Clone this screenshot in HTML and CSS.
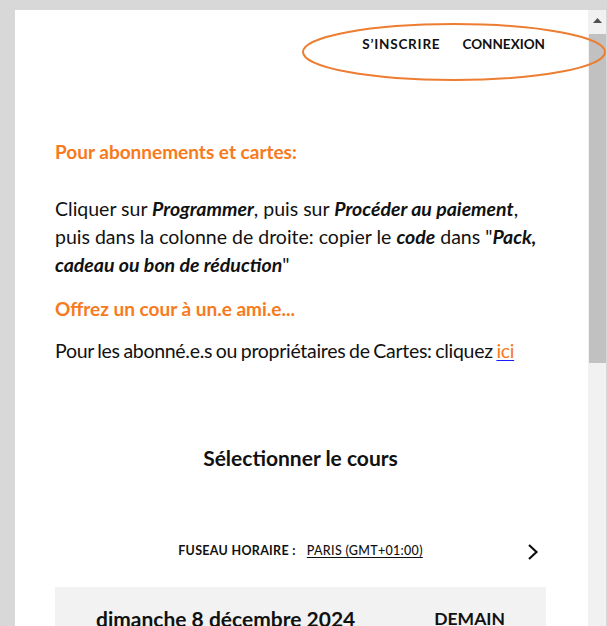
FILE: index.html
```html
<!DOCTYPE html>
<html lang="fr">
<head>
<meta charset="utf-8">
<title>Réservation</title>
<link rel="stylesheet" href="styles.css">
</head>
<body>
<div class="frame">
  <div class="panel">
    <nav class="nav">
      <a class="nav-link" href="#">S’INSCRIRE</a>
      <a class="nav-link narrow" href="#">CONNEXION</a>
    </nav>
    <main class="content">
      <h2 class="promo">Pour abonnements et cartes:</h2>
      <p class="text first">Cliquer sur <b><i>Programmer</i></b>, puis sur <b><i>Procéder au paiement</i></b>, puis dans la colonne de droite: copier le <b><i>code</i></b> dans "<b><i>Pack, cadeau ou bon de réduction</i></b>"</p>
      <h2 class="promo second">Offrez un cour à un.e ami.e...</h2>
      <p class="text tight">Pour les abonné.e.s ou propriétaires de Cartes: cliquez <a class="link" href="#">ici</a></p>
      <h1 class="title">Sélectionner le cours</h1>
      <div class="tz">
        <span class="tz-label">FUSEAU HORAIRE :</span>
        <a class="tz-value" href="#">PARIS (GMT+01:00)</a>
        <svg class="chev" width="14" height="18" viewBox="0 0 14 18"><path d="M3 2 L10.5 9 L3 16" fill="none" stroke="#111" stroke-width="2.2"/></svg>
      </div>
      <div class="day">
        <span class="day-date">dimanche 8 décembre 2024</span>
        <span class="day-tag">DEMAIN</span>
      </div>
    </main>
  </div>
  <div class="scrollbar">
    <div class="sb-btn"><svg width="9" height="5" viewBox="0 0 9 5"><path d="M0 5 L4.5 0 L9 5Z" fill="#505050"/></svg></div>
    <div class="sb-thumb"></div>
    <div class="sb-track"></div>
  </div>
</div>
<svg class="annot" width="320" height="64" viewBox="0 0 320 64"><ellipse cx="152" cy="29" rx="151" ry="28" fill="none" stroke="#ed7d31" stroke-width="2"/></svg>
</body>
</html>
```
FILE: styles.css
```css
html,body{margin:0;padding:0;height:100%;overflow:hidden}
body{background:#d8d8d8;font-family:Lato,"Noto Sans",sans-serif;color:#111;position:relative}
.frame{display:flex;padding:10px 1px 0 15px;height:616px}
.panel{flex:1;background:#fff;overflow:hidden}
.nav{display:flex;justify-content:flex-end;gap:22px;padding:24px 43px 0 0;height:20px}
.nav-link{font-size:13.5px;line-height:20px;font-weight:700;letter-spacing:0.8px;color:#111;text-decoration:none}
.nav-link.narrow{letter-spacing:0}
.content{padding:0 42px 0 40px}
.promo{margin:0;font-size:19px;line-height:24px;font-weight:700;color:#f77a1c}
.promo:first-child{margin-top:86px}
.text{margin:0;font-size:19.5px;line-height:28px}
.text.first{margin-top:31px}
.text.tight{letter-spacing:-0.3px;word-spacing:-1px}
.promo.second{margin-top:18px}
.promo.second + .text{margin-top:16px}
.link{color:#f77a1c;text-decoration-color:#1a1aff;text-underline-offset:2px}
.title{margin:79px 0 0;text-align:center;font-size:21px;line-height:28px;font-weight:700}
.tz{margin-top:70px;display:flex;align-items:center;justify-content:center;position:relative;height:18px;font-size:12.5px;line-height:18px;letter-spacing:0.3px}
.tz-label{font-weight:700}
.tz-value{margin-left:11px;color:#111;font-weight:500;text-decoration:underline;text-underline-offset:2px}
.chev{position:absolute;right:6px;top:1px}
.day{margin-top:27px;background:#f2f2f2;display:flex;justify-content:space-between;padding:17px 41px 20px 41px}
.day-date{font-size:21px;line-height:30px;font-weight:700}
.day-tag{font-size:17.5px;line-height:30px;font-weight:700}
.scrollbar{width:18px;display:flex;flex-direction:column;background:#f1f1f1}
.sb-btn{height:24px;display:flex;align-items:center;justify-content:center}
.sb-btn svg{margin-top:-4px}
.sb-thumb{height:329px;margin-left:1px;background:#c1c1c1}
.sb-track{flex:1}
.annot{position:absolute;left:302px;top:23px;overflow:visible}
```
